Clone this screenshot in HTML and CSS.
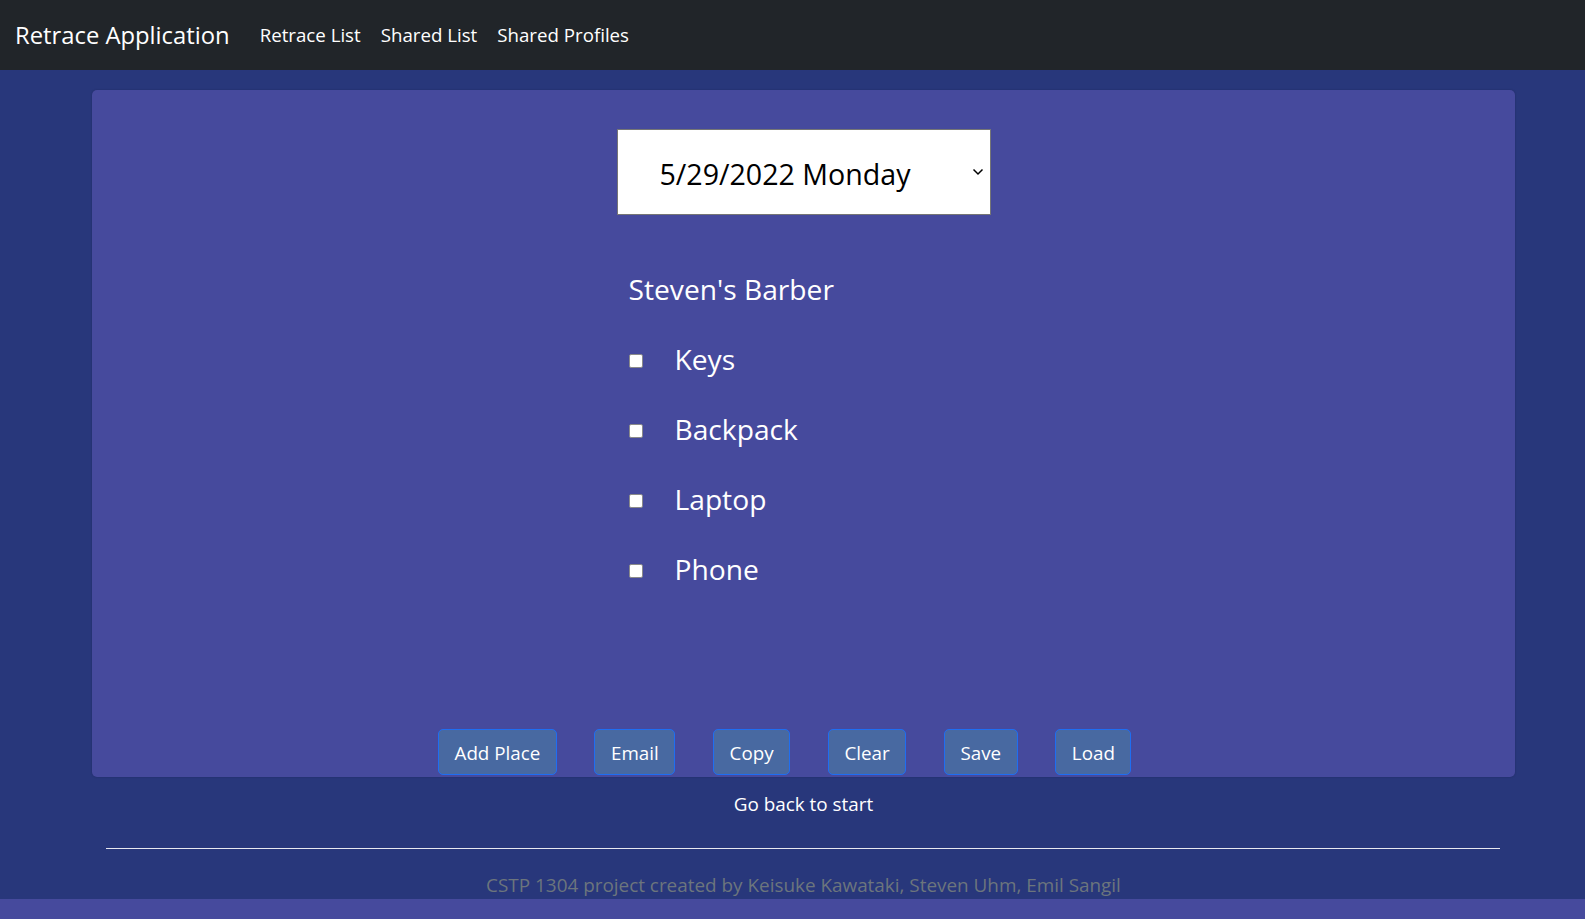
FILE: index.html
```html
<!DOCTYPE html>
<html lang="en">
<head>
<meta charset="utf-8">
<title>Retrace Application</title>
<link rel="stylesheet" href="styles.css">
</head>
<body>
<nav class="navbar">
  <a class="brand" href="#">Retrace Application</a>
  <ul class="nav-links">
    <li><a class="nav-link" href="#">Retrace List</a></li>
    <li><a class="nav-link" href="#">Shared List</a></li>
    <li><a class="nav-link" href="#">Shared Profiles</a></li>
  </ul>
</nav>
<div class="page">
  <main class="container">
    <section class="card">
      <div class="picker">
        <select class="date-select">
          <option>5/29/2022 Monday</option>
        </select>
        <div class="place-list">
          <h4 class="place-title">Steven's Barber</h4>
          <label class="item"><input type="checkbox" class="check"><span>Keys</span></label>
          <label class="item"><input type="checkbox" class="check"><span>Backpack</span></label>
          <label class="item"><input type="checkbox" class="check"><span>Laptop</span></label>
          <label class="item"><input type="checkbox" class="check"><span>Phone</span></label>
        </div>
      </div>
      <div class="actions">
        <button class="btn">Add Place</button>
        <button class="btn">Email</button>
        <button class="btn">Copy</button>
        <button class="btn">Clear</button>
        <button class="btn">Save</button>
        <button class="btn">Load</button>
      </div>
    </section>
    <a class="back-link" href="#">Go back to start</a>
    <hr class="divider">
    <footer class="footer">CSTP 1304 project created by Keisuke Kawataki, Steven Uhm, Emil Sangil</footer>
  </main>
</div>
</body>
</html>
```
FILE: styles.css
```css
* { box-sizing: border-box; }
html, body { margin: 0; padding: 0; }
body {
  background: #464a9d;
  font-family: "Open Sans", "Noto Sans", sans-serif;
  color: #fff;
  height: 919px;
  overflow: hidden;
}
.navbar {
  display: flex;
  align-items: flex-start;
  height: 70px;
  padding: 20px 0 0 15px;
  background: #212529;
}
.brand {
  font-size: 23.8px;
  line-height: 30px;
  color: #fff;
  text-decoration: none;
  margin-right: 20px;
}
.nav-links {
  display: flex;
  list-style: none;
  margin: 0;
  padding: 0;
}
.nav-link {
  display: block;
  padding: 0 10px;
  font-size: 18.7px;
  line-height: 30px;
  color: #fff;
  text-decoration: none;
}
.page {
  background: #28377b;
  padding-top: 20px;
  height: 829px;
}
.container {
  width: 1423px;
  margin-left: 92px;
}
.card {
  height: 687px;
  background: #464a9d;
  border-radius: 5px;
  box-shadow: 0 0 2px rgba(20, 20, 60, 0.35);
  display: flex;
  flex-direction: column;
  align-items: center;
  padding-top: 39px;
  padding-bottom: 2px;
}
.picker {
  width: 374px;
}
.date-select {
  display: block;
  appearance: none;
  -webkit-appearance: none;
  width: 374px;
  height: 86px;
  padding: 2px 40px 0 42px;
  border: 1px solid #767676;
  border-radius: 0;
  background-color: #fff;
  background-image: url("data:image/svg+xml,%3Csvg xmlns='http://www.w3.org/2000/svg' width='12' height='8' viewBox='0 0 12 8'%3E%3Cpath d='M1.5 1.5 L6 6 L10.5 1.5' fill='none' stroke='%23000' stroke-width='1.5'/%3E%3C/svg%3E");
  background-repeat: no-repeat;
  background-position: right 6px center;
  background-size: 12px 8px;
  font-family: "Open Sans", "Noto Sans", sans-serif;
  font-size: 28.6px;
  color: #000;
}
.place-list {
  padding-left: 10px;
  margin-top: 56px;
}
.place-title {
  margin: 0 0 17px 2px;
  font-size: 28.2px;
  line-height: 36px;
  font-weight: 400;
}
.item {
  display: flex;
  align-items: flex-start;
  height: 70px;
  font-size: 28.2px;
  line-height: 70px;
}
.check {
  appearance: none;
  -webkit-appearance: none;
  width: 14px;
  height: 14px;
  margin: 30px 32px 0 2px;
  background: #fff;
  border: 1px solid #8a8a8a;
  border-radius: 2px;
  flex: none;
}
.actions {
  margin-top: auto;
  display: flex;
  justify-content: center;
}
.btn {
  margin-right: 37.6px;
  padding: 8px 15.6px 6px;
  border: 1px solid #1f6ef2;
  border-radius: 5px;
  background: #4869a1;
  color: #fff;
  font-family: "Open Sans", "Noto Sans", sans-serif;
  font-size: 18.8px;
  line-height: 30px;
}
.back-link {
  display: block;
  margin-top: 12px;
  text-align: center;
  font-size: 18.9px;
  line-height: 30px;
  color: #fff;
  text-decoration: none;
}
.divider {
  margin: 29px 15px 0 14px;
  border: 0;
  border-top: 1px solid #e8e8f0;
  height: 0;
}
.footer {
  margin-top: 22px;
  text-align: center;
  font-size: 18.9px;
  line-height: 28px;
  color: #6c757d;
}
```
